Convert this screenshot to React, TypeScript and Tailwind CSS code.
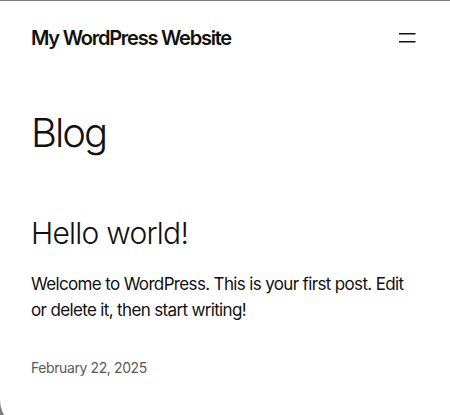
export default function App() {
  return (
    <div className="min-h-[415px] bg-[#7d7d7d] pt-px">
      <div
        className="h-[429px] rounded-bl-[30px] bg-white px-[31px] text-[#111111]"
        style={{ fontFamily: 'Inter, "Noto Sans", sans-serif' }}
      >
        <header className="flex items-center justify-between pt-[24px]">
          <a className="text-[20px] font-semibold leading-[26px] tracking-[-1.25px]">My WordPress Website</a>
          <button aria-label="Menu" className="flex h-6 w-6 items-center justify-center">
            <svg width="24" height="24" viewBox="0 0 24 24">
              <rect x="4" y="7" width="16.5" height="1.5" fill="currentColor" />
              <rect x="4" y="15" width="16.5" height="1.5" fill="currentColor" />
            </svg>
          </button>
        </header>
        <main>
          <h1 className="mt-[58px] text-[40px] font-light leading-[48px] tracking-[-2px]">Blog</h1>
          <article className="mt-[58px]">
            <h2 className="text-[30px] font-light leading-[36px] tracking-[-0.75px]">Hello world!</h2>
            <p className="mt-[20px] text-[17px] font-normal leading-[26px] tracking-[-0.65px]">
              Welcome to WordPress. This is your first post. Edit or delete it, then start writing!
            </p>
            <div className="mt-[35px] text-[14px] font-normal leading-[20px] tracking-[-0.4px] text-[#5a5a5a]">
              February 22, 2025
            </div>
          </article>
        </main>
      </div>
    </div>
  );
}
